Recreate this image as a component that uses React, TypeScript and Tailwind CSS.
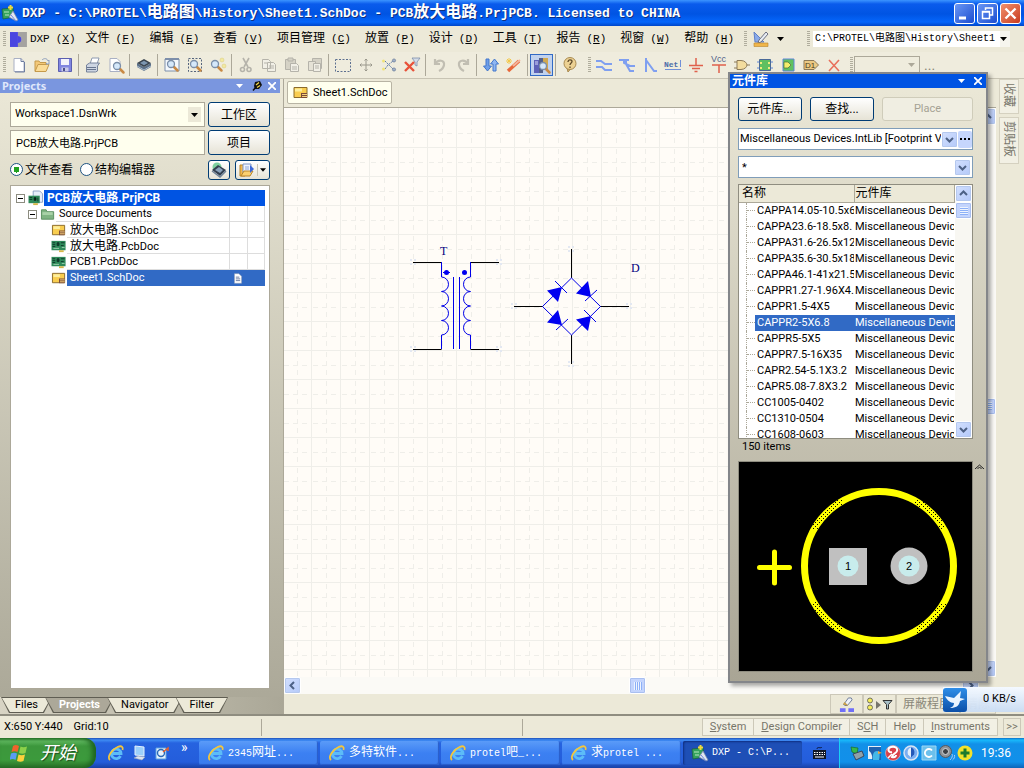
import React from 'react';
import clsx from 'clsx';

const SANS = "font-[Roboto,'Noto_Sans_CJK_SC',sans-serif]";
const MONO = "font-['Liberation_Mono','Noto_Sans_CJK_SC',monospace]";

// Chinese runs are set one size larger than the latin text around them
const Mixed: React.FC<{ text: string; zh?: string }> = ({ text, zh = 'text-[12px]' }) => (
  <span className="whitespace-pre">
    {text.split(/([\u4e00-\u9fff]+)/).map((part, i) =>
      i % 2 ? (
        <span key={i} className={zh}>
          {part}
        </span>
      ) : (
        part
      )
    )}
  </span>
);

const lens = (x: number, y: number) => (
  <g>
    <path d={`M${x + 3} ${y + 3}l3.500 3.500`} stroke="#c98a45" strokeWidth="2.500" strokeLinecap="round" />
    <circle cx={x} cy={y} r="3.500" fill="#d5e8fa" stroke="#7b8ea8" strokeWidth="1.300" />
  </g>
);

const icons: Record<string, React.ReactNode> = {
  new: (
    <>
      <path d="M3 1.500h7l3 3v10H3z" fill="#fff" stroke="#a9b0c4" />
      <path d="M10 1.500v3h3M13.500 5v10H4" fill="none" stroke="#6d7da0" />
    </>
  ),
  open: (
    <>
      <path d="M1 14V4h4l1 1.500h6V8" fill="#f3c878" stroke="#c59a4b" />
      <path d="M1 14.500L4 7.500h11l-3 7z" fill="#fbdc96" stroke="#c59a4b" />
      <path d="M8 3c2-2 5-2 6 1l1-1v4h-3l1-1" fill="none" stroke="#8fa0bd" />
    </>
  ),
  save: (
    <>
      <path d="M1.500 1.500h13v13h-13z" fill="#8186e0" stroke="#5b5fb0" />
      <path d="M4 2h8v6H4z" fill="#f4f4fb" />
      <path d="M4.500 10.500h7v4h-7z" fill="#c9cae8" />
      <path d="M6 11h2v3H6z" fill="#4b4f8a" />
    </>
  ),
  print: (
    <>
      <path d="M5 7l2-6h7l-2 6z" fill="#fff" stroke="#8d9ab0" />
      <path d="M1.500 8l3-2h10l-2 3v5l-2 1h-9z" fill="#cdd5e2" stroke="#76839b" />
      <path d="M2 10.500h9M2 12.500h9" stroke="#68758e" />
    </>
  ),
  preview: (
    <>
      <path d="M2 1.500h7l3 3v10H2z" fill="#fff" stroke="#a9b0c4" />
      {lens(9, 9)}
    </>
  ),
  chip: (
    <>
      <path d="M1 6l7 4v4l-7-4zM15 6l-7 4v4l7-4z" fill="#5b7088" />
      <path d="M1 6l7-4 7 4-7 4z" fill="#39444f" />
      <path d="M4 6l4-2.300L12 6 8 8.300z" fill="#7c96b0" />
      <path d="M1 9l7 4 7-4" stroke="#aebfd0" fill="none" />
    </>
  ),
  zoomDoc: (
    <>
      <path d="M1 2h14v12H1z" fill="#f4f8fc" stroke="#7d8fab" />
      <path d="M1 2h14" stroke="#7d8fab" strokeWidth="2" />
      {lens(7, 7)}
    </>
  ),
  zoomSel: (
    <>
      <path d="M1.500 1.500h13v13h-13z" fill="none" stroke="#55647c" strokeDasharray="2 1.500" />
      {lens(7, 7)}
    </>
  ),
  zoom: (
    <>
      {lens(5, 7)}
      <circle cx="12" cy="3" r="2" fill="#f3e9a0" stroke="#d8cc80" strokeWidth=".5" />
      <circle cx="14" cy="9" r="2" fill="#f3e9a0" stroke="#d8cc80" strokeWidth=".5" />
    </>
  ),
  cut: (
    <g fill="none" stroke="#b5b3aa" strokeWidth="1.600">
      <path d="M5 1l5 9M11 1L6 10" />
      <circle cx="4.500" cy="12.500" r="2" />
      <circle cx="11" cy="12.500" r="2" />
    </g>
  ),
  copy: (
    <g fill="#f1efe6" stroke="#b5b3aa">
      <path d="M1.500 2.500h6l2 2v7h-8zM6.500 5.500h6l2 2v7h-8z" />
      <path d="M3 6h3M8 9h5M8 11h5" />
    </g>
  ),
  paste: (
    <g fill="#d5d2c6" stroke="#b5b3aa">
      <path d="M1.500 2.500h10v10h-10z" />
      <path d="M4 1h5v3H4z" />
      <path d="M6.500 6.500h6l2 2v6h-8z" fill="#f1efe6" />
      <path d="M8 10h5M8 12h5" />
    </g>
  ),
  pasteAll: (
    <g fill="#d5d2c6" stroke="#b5b3aa">
      <path d="M5.500 1.500h9v10h-9z" />
      <path d="M1.500 4.500h7v9h-7z" fill="#e5e2d6" />
      <path d="M6.500 6.500h7v8h-7z" fill="#f1efe6" />
      <path d="M8 9h4M8 11h4" />
    </g>
  ),
  select: <path d="M.5 2.500h15v12H.5z" fill="none" stroke="#5d7090" strokeDasharray="2 1.500" />,
  move: (
    <path
      d="M8 2v12M2 8h12M6.500 3.500L8 2l1.500 1.500M6.500 12.500L8 14l1.500-1.500M3.500 6.500L2 8l1.500 1.500M12.500 6.500L14 8l-1.500 1.500"
      fill="none"
      stroke="#9a988c"
    />
  ),
  clear: (
    <>
      <path d="M4 4l8 8M4 12l3-4 5-4" stroke="#5d7ba8" strokeDasharray="2 1" fill="none" />
      <circle cx="2.500" cy="4" r="1.500" fill="#f0e37a" />
      <circle cx="2.500" cy="12" r="1.500" fill="#f0e37a" />
      <circle cx="13" cy="3.500" r="1.600" fill="#9fb0c8" stroke="#5d7090" strokeWidth=".6" />
      <circle cx="13" cy="12.500" r="1.600" fill="#9fb0c8" stroke="#5d7090" strokeWidth=".6" />
    </>
  ),
  filter: (
    <>
      <path d="M8 1h8l-3 4v4l-2-1V5z" fill="#d5dde8" stroke="#7d8fab" strokeWidth=".8" />
      <path d="M1 5l9 9M10 5l-9 9" stroke="#e8523a" strokeWidth="2.400" />
    </>
  ),
  undo: <path d="M3 2v5h5M3 7c3-5 10-4 9 1-.5 3-3 5-5 6" fill="none" stroke="#c1beb2" strokeWidth="2.200" />,
  redo: <path d="M13 2v5H8M13 7C10 2 3 3 4 8c.5 3 3 5 5 6" fill="none" stroke="#c1beb2" strokeWidth="2.200" />,
  updown: (
    <>
      <path d="M3 2h3v7h2.500L4.500 14 .5 9H3z" fill="#6f9fe8" stroke="#4377cc" />
      <path d="M10 14h3V7h2.500L11.500 2 7.500 7H10z" fill="#8fb6f2" stroke="#4377cc" />
    </>
  ),
  wand: (
    <>
      <path d="M2 14L13 4" stroke="#e8683a" strokeWidth="3.500" />
      <path d="M7 9l7-6" stroke="#f3b49c" strokeWidth="2" />
      <path d="M3 1v6M0 4h6M1 2l4 4M5 2L1 6" stroke="#f3c84a" />
    </>
  ),
  library: (
    <>
      <path d="M0 3h5v13H0z" fill="#5d62b8" />
      <path d="M1 5h3M1 7h3" stroke="#d9dbf8" />
      <path d="M5 1h4v15H5z" fill="#53608a" />
      <path d="M9 1h5v12H9z" fill="#d1a94f" />
      {lens(9, 9)}
    </>
  ),
  help: (
    <>
      <path d="M5 11l1 4 3-3.500" fill="#dcb873" stroke="#a98a50" />
      <circle cx="8" cy="6.500" r="6" fill="#ecd193" stroke="#a98a50" />
      <path d="M6 5c0-3 4-2.500 4-.5C10 6 8 6 8 8M8 9.500V11" fill="none" stroke="#5e4a2a" strokeWidth="1.300" />
    </>
  ),
  wire: <path d="M0 4h5l4 3h7M0 10h6l3 3h7" fill="none" stroke="#7f9ff0" strokeWidth="2" />,
  bus: <path d="M0 3h10M5 3v3l6 3h5M7 3v4l4 7h4" fill="none" stroke="#7f9ff0" strokeWidth="2" />,
  entry: <path d="M4 1v14M4 3l8 11h3" fill="none" stroke="#7f9ff0" strokeWidth="2" />,
  net: (
    <>
      <text x="-1" y="10" fontSize="8" fill="#4d6ca8" fontFamily="Liberation Mono" fontWeight="bold">
        Net
      </text>
      <path d="M15.500 3v7M0 12.500h16" stroke="#6f8fd8" />
    </>
  ),
  gnd: <path d="M8 1v7M1 8.500h14M4 11.500h8M6.500 14.500h3" stroke="#e0604c" strokeWidth="1.500" />,
  vcc: (
    <>
      <text x="0" y="5" fontSize="9" fill="#53648a" fontFamily="Liberation Sans">
        Vcc
      </text>
      <path d="M1 8h14M8 8v8" stroke="#e0604c" strokeWidth="1.500" />
    </>
  ),
  gate: (
    <>
      <path d="M0 5h3M0 11h3M12 8h4" stroke="#8d7a58" />
      <path d="M3 3.500h4c4 0 6 3 6 4.500s-2 4.500-6 4.500H3z" fill="#f3dc9e" stroke="#8d7a58" />
    </>
  ),
  sheet: (
    <>
      <path d="M0 5h16M0 11h16" stroke="#5f86d8" />
      <path d="M2.500 2.500h11v11h-11z" fill="#5fc060" stroke="#4a6a98" />
      <path d="M3 5h2v2H3zM11 5h2v2h-2zM3 10h2v2H3zM11 10h2v2h-2z" fill="#f0ec7a" />
    </>
  ),
  port: (
    <>
      <path d="M3 2h11v12H3z" fill="#5fc060" stroke="#5f86d8" />
      <path d="M4 5h4l3 3-3 3H4z" fill="#f3ee6a" stroke="#4a6a3a" strokeWidth=".7" />
    </>
  ),
  d1: (
    <>
      <path d="M1 3.500h10L15.500 8 11 12.500H1z" fill="#ecca84" stroke="#8d7a58" />
      <text x="2" y="11" fontSize="8" fill="#4b3b1c" fontFamily="Liberation Sans">
        D1
      </text>
    </>
  ),
  cross: <path d="M3 3l10 11M13 3L3 14" stroke="#e8705c" strokeWidth="1.600" />,
  draw: (
    <>
      <path d="M1 1l1 10h9z" fill="#8aaae8" stroke="#5e80c8" />
      <path d="M6 9l7-8 2 2-7 8-3 1z" fill="#e8edf4" stroke="#6b6f80" />
      <path d="M1 12h14v3.500H1z" fill="#f0b64a" stroke="#b8842c" strokeWidth=".6" />
    </>
  ),
  ie: (
    <>
      <path d="M12.500 11A4.800 4.800 0 1 1 13 8.500H4" fill="none" stroke="#5cbcf8" strokeWidth="2.800" />
      <path d="M2 15C-1.500 12 4 4.500 10 1.800c3.500-1.400 5.500 0 4.500 3.200" fill="none" stroke="#f4c63c" strokeWidth="1.800" />
    </>
  ),
  desktop: (
    <>
      <path d="M4 1l9 1v9l-9-1z" fill="#9cd0fb" stroke="#e5f1fd" />
      <path d="M3 13l4-2 7 1-3 3z" fill="#dfe5ee" stroke="#9aa6ba" strokeWidth=".6" />
    </>
  ),
  mail: (
    <>
      <path d="M2 3h10v11H2z" fill="#e8f3fc" stroke="#5aa0e0" />
      <circle cx="7" cy="8" r="3.500" fill="none" stroke="#2a6ab8" strokeWidth="1.400" />
      <path d="M9 7l5-4v3" fill="none" stroke="#e8602a" strokeWidth="1.500" />
    </>
  ),
  app: (
    <>
      <path d="M0 4l11-1 1 9-11 2z" fill="#35a35c" stroke="#1d5c38" strokeWidth=".7" />
      <path d="M2 7h5M3 10h4" stroke="#b8e8c0" />
      <path d="M8.500 0v5M6 2.500h5" stroke="#f0dc3a" strokeWidth="2" />
      <path d="M7 12l4-6 5 9-2 1z" fill="#e0e6f2" stroke="#7888a8" strokeWidth=".8" />
      <path d="M9 10l5 6" stroke="#6d86d8" />
    </>
  ),
  keyboard: (
    <>
      <path d="M5 4c0-3 4 0 5-2" fill="none" stroke="#0b1a40" />
      <path d="M1 5h13v9H1z" fill="#101828" />
      <path d="M2 7.500h11M2 9.500h11" stroke="#fff" strokeDasharray="1.500 1" />
      <path d="M3 12h9" stroke="#fff" />
    </>
  ),
  sch: (
    <>
      <path d="M1 2.500h13v10H1z" fill="#f9cd4f" stroke="#8a6a2a" />
      <path d="M2 3.500h7v3H2z" fill="#fdee9c" />
      <path d="M8 8h6v5H8z" fill="#7a4a3a" />
      <path d="M9 9.500h5M9 11.500h5" stroke="#f6d27a" />
    </>
  ),
  pcb: (
    <>
      <path d="M0 2h15v10H0z" fill="#2f8a5a" />
      <path d="M1 4h3M1 6h3M1 8h3M6 4h2v3H6zM10 4h4M10 7h3" stroke="#0f3a2a" fill="#0f3a2a" />
      <path d="M2 10h6M11 9h3" stroke="#9ccfae" />
      <path d="M8 12h5v2H8z" fill="#d6b84a" />
    </>
  ),
  project: (
    <>
      <path d="M5 0h7l3 3v9H5z" fill="#e6eefa" stroke="#8ba0c4" />
      <path d="M0 5h12v8H0z" fill="#2f8a5a" />
      <path d="M1 7h3M1 9h3M6 7h2v3H6zM10 7v4" stroke="#0f3a2a" />
      <path d="M5 13h5v2H5z" fill="#d6b84a" />
    </>
  ),
  folder: (
    <>
      <path d="M1 3h5l1 2h7v8H1z" fill="#7fb482" stroke="#5a8f60" />
      <path d="M2 5.500h11v3H2z" fill="#a9d2a8" />
    </>
  ),
  chipGlobe: (
    <>
      <circle cx="6" cy="5" r="4.500" fill="#7ed0a0" />
      <path d="M1 8l6-5 8 5-6 6z" fill="#333f4f" />
      <path d="M4 8l4-3 4 3-3 3z" fill="#8ba4bc" />
      <path d="M1 9l8 6 6-6" fill="none" stroke="#6f8296" strokeWidth="1.500" />
    </>
  ),
  docs: (
    <>
      <path d="M1 3h5v11H1z" fill="#f3b94a" stroke="#b98428" />
      <path d="M4 2h8v9H4z" fill="#eef3fd" stroke="#7d95c8" />
      <path d="M6 5h4M6 7h4" stroke="#8fa6d8" />
      <path d="M2 14l3-5h9l-3 5z" fill="#fbd070" stroke="#b98428" />
      <path d="M11 3l4 4-4 4z" fill="#3c68d8" />
    </>
  ),
  page: (
    <>
      <path d="M4 3h5l3 3v8H4z" fill="#fff" stroke="#9aa4b8" strokeWidth=".6" />
      <path d="M5.500 7h4M5.500 9h5M5.500 11h5" stroke="#5b6f98" />
    </>
  ),
  eraser: (
    <>
      <path d="M5 8l5-7h3l1 2-5 6H6z" fill="#eef2f8" stroke="#6a7896" />
      <path d="M5 8l1-1.500 3 2.500" stroke="#caa24c" strokeWidth="1.500" />
      <path d="M1 12h6v4H1zM10 12h6v4h-6z" fill="#6f6ff8" />
    </>
  ),
  trayCard: (
    <>
      <path d="M2 2l7 1-1 6-5-2z" fill="#38b848" stroke="#1a6a2c" strokeWidth=".7" />
      <path d="M4 9l9-3 2 5-8 4z" fill="#8fa0a8" stroke="#334" strokeWidth=".8" />
    </>
  ),
  trayBird: (
    <>
      <path d="M1 1h13v13H1z" fill="#e4eef8" />
      <path d="M2 2h12v13H5c1-4-1-8-3-9z" fill="#1f62b0" />
      <path d="M6 15c-1-6 1-9 4-9s3 4 2 9z" fill="#44b8e8" />
      <path d="M11 6l4 2-4 1z" fill="#f4a83a" />
    </>
  ),
  trayFan: (
    <>
      <circle cx="8" cy="8" r="7.500" fill="#d8414a" stroke="#f3c4c4" strokeWidth=".6" />
      <path d="M7 7C3 8 2 3 6 2c4-1 7 1 6 4-1 3-4 2-5 6 4 1 4-2 4-2" fill="none" stroke="#fff" strokeWidth="2" />
      <path d="M3 13L7 9" stroke="#fff" strokeWidth="1.500" />
    </>
  ),
  trayShield: (
    <>
      <circle cx="8" cy="8" r="7" fill="#7aaef2" stroke="#d8e4f4" strokeWidth="1.500" />
      <path d="M8 2.500c3 1 4 4 3 7l-3 3z" fill="#2458b8" />
      <path d="M8 2.500c-3 1-4 4-3 7l3 3z" fill="#e5effc" />
    </>
  ),
  trayC: (
    <>
      <path d="M1 1h14v14H1z" fill="#6cc0ec" stroke="#9cd8f4" />
      <path d="M11 5.500A4 4 0 1 0 11 10.500" fill="none" stroke="#fff" strokeWidth="1.800" />
    </>
  ),
  traySound: (
    <>
      <circle cx="6.500" cy="6.500" r="6" fill="#8d9298" stroke="#55595f" />
      <circle cx="6.500" cy="6.500" r="3" fill="#3c4046" stroke="#d5d8dc" />
      <path d="M13 9c1 2 0 4-2 6M15.500 10c.5 2-.5 4-2 5" fill="none" stroke="#a8c8f4" />
    </>
  ),
  trayPlus: (
    <>
      <circle cx="8" cy="8" r="7.500" fill="#f2e22c" />
      <path d="M8 3.500v9M3.500 8h9" stroke="#1d7a2c" strokeWidth="3" />
    </>
  ),
};

const Icon: React.FC<{ name: string; className?: string }> = ({ name, className = 'size-4' }) => (
  <svg viewBox="0 0 16 16" className={clsx('shrink-0 overflow-visible', className)} aria-hidden="true">
    {icons[name]}
  </svg>
);

const Caret: React.FC<{ className?: string }> = ({ className = 'text-black' }) => (
  <svg viewBox="0 0 7 4" className={clsx('h-1 w-[7px] shrink-0', className)} aria-hidden="true">
    <path d="M0 0h7L3.500 4z" fill="currentColor" />
  </svg>
);

const chevrons: Record<string, string> = {
  up: 'M1 6l3.500-3.500L8 6',
  down: 'M1 3l3.500 3.500L8 3',
  left: 'M6 1L2.500 4.500 6 8',
  right: 'M3 1l3.500 3.500L3 8',
};

const ScrollButton: React.FC<{ dir: string; label: string }> = ({ dir, label }) => (
  <button
    aria-label={label}
    className="flex size-[17px] shrink-0 items-center justify-center rounded-xs border border-white bg-linear-to-br from-[#d3e0fe] to-[#b4c9f9] shadow-[0_0_0_1px_#b5c8ee_inset]"
  >
    <svg viewBox="0 0 9 9" className="size-[9px]" aria-hidden="true">
      <path d={chevrons[dir]} fill="none" stroke="#4d6185" strokeWidth="2" />
    </svg>
  </button>
);

const Thumb: React.FC<{ vertical?: boolean }> = ({ vertical }) => (
  <div className="flex size-[17px] shrink-0 items-center justify-center rounded-xs border border-white bg-[#c3d4fd] shadow-[0_0_0_1px_#a9bff0_inset]">
    <div
      className={clsx(
        'size-2',
        vertical
          ? 'bg-[repeating-linear-gradient(180deg,#eef4fe_0_1px,#8cb0f8_1px_2px)]'
          : 'bg-[repeating-linear-gradient(90deg,#eef4fe_0_1px,#8cb0f8_1px_2px)]'
      )}
    />
  </div>
);

const Grip = () => (
  <div className="mr-px ml-[3px] h-4 w-[3px] shrink-0 bg-[repeating-linear-gradient(180deg,#b0ad9d_0_1px,transparent_1px_2px)]" />
);

const menus = [
  ['DXP', 'X'],
  ['文件', 'F'],
  ['编辑', 'E'],
  ['查看', 'V'],
  ['项目管理', 'C'],
  ['放置', 'P'],
  ['设计', 'D'],
  ['工具', 'T'],
  ['报告', 'R'],
  ['视窗', 'W'],
  ['帮助', 'H'],
];

const mainTools =
  'new open save | print preview | chip | zoomDoc zoomSel zoom | cut copy paste pasteAll | select move clear filter | undo redo | updown wand | library | help'.split(' ');
const wiringTools = 'wire bus entry net gnd vcc gate sheet port d1 cross'.split(' ');

const TitleBar = () => (
  <header className="flex h-[26px] items-center bg-[linear-gradient(180deg,#3c94ff_0,#0a5bec_4px,#0054e3_14px,#0566fb_22px,#0046c8_26px)] pr-[3px] pl-[2px]">
    <Icon name="app" />
    <h1 className={clsx(MONO, 'ml-1 flex-1 truncate text-[13px] leading-[26px] font-bold text-white [text-shadow:1px_1px_0_#0f2f80]')}>
      <Mixed text="DXP - C:\PROTEL\电路图\History\Sheet1.SchDoc - PCB放大电路.PrjPCB. Licensed to CHINA" zh="text-[16px]" />
    </h1>
    <div className="flex gap-0.5">
      {['min', 'restore', 'close'].map((kind) => (
        <button
          key={kind}
          aria-label={kind}
          className={clsx(
            'size-[21px] rounded-[3px] border border-white',
            kind === 'close'
              ? 'bg-linear-to-br from-[#f0906c] to-[#c8381c]'
              : 'bg-linear-to-br from-[#6a96f4] to-[#1c4cd0]'
          )}
        >
          <svg viewBox="0 0 19 19" fill="none" stroke="#fff" strokeWidth="2" aria-hidden="true">
            {kind === 'min' && <path d="M4 14h7" strokeWidth="3" />}
            {kind === 'restore' && (
              <path d="M7.500 6V4h7v7H12M4.500 7.500h7v7h-7zM4 8h8" strokeWidth="1.500" />
            )}
            {kind === 'close' && <path d="M4.500 4.500l10 10M14.500 4.500l-10 10" strokeWidth="2.400" />}
          </svg>
        </button>
      ))}
    </div>
  </header>
);

const MenuBar = () => (
  <nav className="flex h-[26px] items-center pr-[14px]">
    <Grip />
    <svg viewBox="0 0 17 15" className="ml-[3px] h-[15px] w-[17px]" aria-hidden="true">
      <path d="M0 0h8v15H0z" fill="#4a46e0" />
      <path d="M8 0h9v15H8V11a3.500 3.500 0 0 0 0-7z" fill="#a5a3a0" />
      <path d="M8 4a3.500 3.500 0 0 1 0 7z" fill="#4a46e0" />
    </svg>
    <div className="flex flex-1">
      {menus.map(([label, key]) => (
        <button
          key={key}
          className={clsx(MONO, 'flex items-baseline gap-1.5 text-[11px] leading-4', key === 'X' ? 'px-[3px]' : 'px-[7px]')}
        >
          <Mixed text={label} />
          <span>
            (<u>{key}</u>)
          </span>
        </button>
      ))}
    </div>
    <Grip />
    <button className="flex items-center gap-2 pr-5 pl-[5px]" aria-label="绘图工具">
      <Icon name="draw" />
      <Caret />
    </button>
    <Grip />
    <div className="relative ml-0.5 flex w-[198px] items-center">
      <select
        aria-label="文件路径"
        className={clsx(MONO, 'h-4 w-full appearance-none bg-white pl-0.5 text-[10px] leading-4')}
      >
        <option>C:\PROTEL\电路图\History\Sheet1</option>
      </select>
      <span className="pointer-events-none absolute right-0 flex h-4 w-2.5 items-center bg-[#f6f5ee]">
        <Caret />
      </span>
    </div>
  </nav>
);

const ToolBar = () => (
  <div className="flex h-[26px] items-center bg-[#efecdd] pb-px">
    <Grip />
    {mainTools.map((name, i) =>
      name === '|' ? (
        <span key={i} className="mx-0.5 h-[22px] w-px shrink-0 bg-[#aca899]" />
      ) : (
        <button
          key={i}
          aria-label={name}
          className={clsx(
            'flex h-[22px] w-[23px] shrink-0 items-center justify-center',
            name === 'library' && 'border border-[#316ac5] bg-[#c1d2ee]'
          )}
        >
          <Icon name={name} />
        </button>
      )
    )}
    <div className="ml-1">
      <Grip />
    </div>
    {wiringTools.map((name) => (
      <button key={name} aria-label={name} className="flex h-[22px] w-[23px] shrink-0 items-center justify-center">
        <Icon name={name} />
      </button>
    ))}
    <div className="ml-0.5">
      <Grip />
    </div>
    <button
      disabled
      aria-label="过滤器"
      className="flex h-[18px] w-[66px] shrink-0 items-center justify-end border border-[#aca899] pr-1"
    >
      <Caret className="text-[#aca899]" />
    </button>
    <span className="ml-1 text-[14px] leading-4 text-[#8a8778]">...</span>
  </div>
);

const xpButton =
  'rounded-[3px] border border-[#003c74] bg-linear-to-b from-white to-[#e6e3d6] text-[12px] leading-4';

interface TreeRowProps {
  icon: string;
  label: string;
  indent: string;
  expand?: boolean;
  selected?: boolean;
  root?: boolean;
}

const TreeRow: React.FC<TreeRowProps> = ({ icon, label, indent, expand, selected, root }) => (
  <li className={clsx('flex h-4 items-center', indent)}>
    {expand && (
      <button
        aria-label="折叠"
        className="mr-[3px] flex size-[9px] items-center justify-center border border-[#8c8c80] bg-white"
      >
        <span className="h-px w-[5px] bg-black" />
      </button>
    )}
    <Icon name={icon} className="h-[15px] w-4" />
    <span
      className={clsx(
        'flex h-4 flex-1 items-center pl-[3px] leading-4',
        root ? 'bg-[#0054e3] text-[12px] font-bold text-white' : 'text-[11px]',
        selected && 'bg-[#316ac5] text-white',
        !root && !selected && 'shadow-[inset_0_-1px_0_#dddddd]'
      )}
    >
      <span className="flex-1">
        <Mixed text={label} />
      </span>
      {!root && (
        <>
          <span className={clsx('flex h-4 w-[18px] items-center justify-center', !selected && 'border-l border-[#dddddd]')}>
            {selected && <Icon name="page" className="size-[14px]" />}
          </span>
          <span className={clsx('h-4 w-[18px]', !selected && 'border-x border-[#dddddd]')} />
        </>
      )}
    </span>
  </li>
);

const tabShape = '[clip-path:polygon(0_0,100%_0,calc(100%-8px)_100%,8px_100%)]';

const ProjectsPanel = () => (
  <aside className="flex w-[284px] shrink-0 flex-col border-r border-[#aca899] bg-linear-to-b from-[#ece9d8] to-[#aaa797]">
    <div className="mr-[3px] flex h-[14px] items-center bg-[#7a96df] pr-1 pl-[2px] text-[#dfe7fb]">
      <h2 className="flex-1 font-['Noto_Sans',sans-serif] text-[11px] leading-[14px] font-bold">Projects</h2>
      <Caret className="mr-2 !w-[9px] text-white" />
      <svg viewBox="0 0 10 10" className="mr-1.5 size-[10px]" aria-hidden="true">
        <path d="M3 1l5-1 2 4-3 4-4 0-1-3z" fill="#111" />
        <path d="M4 4l3-2.500M5 6.500l3-2" stroke="#f4d84a" strokeWidth="1.300" fill="none" />
        <path d="M4 6L1 9.500" stroke="#111" strokeWidth="1.500" />
      </svg>
      <svg viewBox="0 0 8 8" className="size-2" aria-hidden="true">
        <path d="M0 0l8 8M8 0L0 8" stroke="#fff" strokeWidth="1.800" />
      </svg>
    </div>
    <div className="flex flex-1 flex-col pt-[9px] pr-[13px] pb-2 pl-[10px]">
      <div className="grid grid-cols-[1fr_62px] gap-[3px]">
        <div className="relative flex items-center">
          <select
            aria-label="工作区"
            className="h-[25px] w-full appearance-none border border-[#aca899] bg-[#ffffee] pl-1 text-[11px]"
          >
            <option>Workspace1.DsnWrk</option>
          </select>
          <span className="pointer-events-none absolute right-1 flex h-[15px] w-[13px] items-center justify-center bg-[#ece9d8]">
            <Caret />
          </span>
        </div>
        <button className={clsx(xpButton, 'h-[25px]')}>工作区</button>
        <input
          aria-label="项目"
          readOnly
          value="PCB放大电路.PrjPCB"
          className="h-[25px] min-w-0 border border-[#aca899] bg-[#ffffee] px-[5px] pb-0.5 text-[11px] leading-4"
        />
        <button className={clsx(xpButton, 'h-[25px]')}>项目</button>
      </div>
      <div className="mt-1 flex h-[21px] items-center text-[12px] leading-4">
        {['文件查看', '结构编辑器'].map((label, i) => (
          <label key={label} className="mr-[7px] flex items-center gap-0.5">
            <input
              type="radio"
              name="view"
              defaultChecked={i === 0}
              className="size-[13px] appearance-none rounded-full border border-[#1d5281] bg-white checked:bg-[radial-gradient(#21a121_0_3px,#fff_3px)]"
            />
            {label}
          </label>
        ))}
        <span className="flex-1" />
        <button aria-label="编译" className={clsx(xpButton, 'flex h-5 w-[22px] items-center justify-center')}>
          <Icon name="chipGlobe" />
        </button>
        <button aria-label="文档" className={clsx(xpButton, 'ml-[5px] flex h-5 w-[35px] items-center justify-between px-[3px]')}>
          <Icon name="docs" />
          <span className="h-3 w-px bg-[#c8c4b4]" />
          <Caret className="!w-[6px] text-black" />
        </button>
      </div>
      <ul className="mt-[5px] flex-1 border border-[#aca899] bg-white pt-1 pr-1">
        <TreeRow icon="project" label="PCB放大电路.PrjPCB" indent="pl-[5px]" expand root />
        <TreeRow icon="folder" label="Source Documents" indent="pl-[17px]" expand />
        <TreeRow icon="sch" label="放大电路.SchDoc" indent="pl-10" />
        <TreeRow icon="pcb" label="放大电路.PcbDoc" indent="pl-10" />
        <TreeRow icon="pcb" label="PCB1.PcbDoc" indent="pl-10" />
        <TreeRow icon="sch" label="Sheet1.SchDoc" indent="pl-10" selected />
      </ul>
    </div>
    <div className="flex h-[17px] bg-linear-to-r from-[#d8d4c4] to-[#aaa797] pl-px text-[11px] leading-[14px]">
      {['Files', 'Projects', 'Navigator', 'Filter'].map((tab) => (
        <button key={tab} className={clsx('-mr-[7px] h-4 bg-[#5f5d52] p-px', tabShape)}>
          <span
            className={clsx(
              'block h-[14px] px-[13px]',
              tabShape,
              tab === 'Projects' ? 'bg-[#aca899] font-bold text-white' : 'bg-[#ece9d8]'
            )}
          >
            {tab}
          </span>
        </button>
      ))}
    </div>
  </aside>
);

const LeadEnd: React.FC<{ x: number; y: number }> = ({ x, y }) => (
  <path d={`M${x - 3} ${y - 3}h2v2h-2zM${x + 1} ${y - 3}h2v2h-2zM${x - 3} ${y + 1}h2v2h-2zM${x + 1} ${y + 1}h2v2h-2z`} fill="#e3e8f2" />
);

const Schematic = () => (
  <svg className="absolute inset-0 size-full bg-[#fffcf7]" role="img" aria-label="Sheet1.SchDoc">
    <defs>
      <pattern id="grid" width="29" height="29" x="27" y="10" patternUnits="userSpaceOnUse">
        <path d="M.5 0v29M0 .5h29" stroke="#efeee9" />
        <path d="M15.500 2v29M2 15.500h29" stroke="#efeee9" strokeDasharray="5 4" />
      </pattern>
    </defs>
    <rect width="100%" height="100%" fill="url(#grid)" />
    {[
      [129, 154],
      [215, 154],
      [129, 241],
      [215, 241],
      [287, 141],
      [287, 256],
      [230, 198],
      [345, 198],
    ].map(([x, y]) => (
      <LeadEnd key={`${x}-${y}`} x={x} y={y} />
    ))}
    <g fill="none" stroke="#000">
      <path d="M129 154.500h28.500M186.500 154.500H215M129 241.500h28.500M186.500 241.500H215" />
      <path d="M287.500 141v29M287.500 227v29M230 198.500h29M316 198.500h29" />
    </g>
    <g fill="none" stroke="#0000e8">
      <path d="M157.500 154v15a7 7.250 0 0 1 0 14.500a7 7.250 0 0 1 0 14.500a7 7.250 0 0 1 0 14.500a7 7.250 0 0 1 0 14.500v14" />
      <path d="M186.500 154v15a7 7.250 0 0 0 0 14.500a7 7.250 0 0 0 0 14.500a7 7.250 0 0 0 0 14.500a7 7.250 0 0 0 0 14.500v14" />
      <path d="M169.500 169v72M175.500 169v72" />
      <path d="M287.500 170l29 28.500-29 28.500-29-28.500z" />
      <path d="M271 173l12 12M301 193l12-11M272 222l12-11M300 202l12 12" />
    </g>
    <g fill="#0000f0">
      <path d="M159 164h7v1h-7z" />
      <circle cx="162.500" cy="164.500" r="2.500" />
      <circle cx="180.500" cy="164.500" r="2.500" />
      <path d="M263 182.500l15-3.500-4 15zM292 185.500l12-12.500 3 16zM263 214.500l11-12.500 4 15zM292 211.500l15-3.500-3 15z" />
    </g>
    <g fill="#000080" fontSize="12" fontFamily="Liberation Serif, serif">
      <text x="156" y="147">
        T
      </text>
      <text x="347" y="164">
        D
      </text>
    </g>
  </svg>
);

const Workspace = () => (
  <main className="flex min-w-0 flex-1 flex-col">
    <div className="flex h-[29px] items-center border-b border-[#aca899] pl-[3px]">
      <button className="mb-px flex h-[23px] items-center gap-1 rounded-[2px] border border-[#b8b4a4] bg-[#ffffee] pr-[3px] pl-[5px] text-[11px] leading-4">
        <Icon name="sch" />
        Sheet1.SchDoc
      </button>
    </div>
    <div className="flex flex-1">
      <div className="relative flex-1">
        <Schematic />
      </div>
      <div className="flex w-[17px] flex-col bg-[#fbfaf6]">
        <ScrollButton dir="up" label="向上滚动" />
        <span className="flex-[10]" />
        <Thumb vertical />
        <span className="flex-[9]" />
        <ScrollButton dir="down" label="向下滚动" />
      </div>
    </div>
    <div className="mr-[17px] flex h-[17px] bg-[#fbfaf6]">
      <ScrollButton dir="left" label="向左滚动" />
      <span className="flex-[51]" />
      <Thumb />
      <span className="flex-[49]" />
      <ScrollButton dir="right" label="向右滚动" />
    </div>
    <div className="flex h-5 justify-end text-[12px] leading-4 text-[#8a8778]">
      <button aria-label="清除遮罩" className="flex w-[33px] items-center justify-center border border-[#ccc8b8]">
        <Icon name="eraser" className="size-[15px]" />
      </button>
      <button aria-label="过滤" className="flex w-[33px] items-center justify-center border border-[#ccc8b8]">
        <svg viewBox="0 0 26 14" className="h-[14px] w-[26px]" aria-hidden="true">
          <circle cx="3" cy="3.500" r="2.500" fill="#f4ec5a" stroke="#555" strokeWidth=".8" />
          <circle cx="3" cy="10.500" r="2.500" fill="#f4ec5a" stroke="#555" strokeWidth=".8" />
          <path d="M9 4l5 4-5 4z" fill="#77756c" />
          <path d="M16 3.500h9l-3.500 4V12h-2V7.500z" fill="#a8c0c8" stroke="#333" />
        </svg>
      </button>
      <button className="w-[64px] border border-[#ccc8b8] px-1.5 text-left whitespace-nowrap">屏蔽程度</button>
      <button className="w-9 border border-[#ccc8b8]">清除</button>
    </div>
  </main>
);

const parts = [
  'CAPPA14.05-10.5x6',
  'CAPPA23.6-18.5x8.',
  'CAPPA31.6-26.5x12',
  'CAPPA35.6-30.5x18',
  'CAPPA46.1-41x21.5',
  'CAPPR1.27-1.96X4.',
  'CAPPR1.5-4X5',
  'CAPPR2-5X6.8',
  'CAPPR5-5X5',
  'CAPPR7.5-16X35',
  'CAPR2.54-5.1X3.2',
  'CAPR5.08-7.8X3.2',
  'CC1005-0402',
  'CC1310-0504',
  'CC1608-0603',
];

const Footprint = () => (
  <svg viewBox="0 0 233 209" className="block w-full bg-black" role="img" aria-label="CAPPR2-5X6.8">
    <defs>
      <pattern id="mesh" width="4" height="4" patternUnits="userSpaceOnUse">
        <path d="M0 0h1v1H0zM2 2h1v1H2z" fill="#000" />
      </pattern>
    </defs>
    <circle cx="140" cy="104" r="74.500" fill="none" stroke="#ffff00" strokeWidth="7" />
    <path
      d="M75 67a74.500 74.500 0 0 1 28-28M177 39a74.500 74.500 0 0 1 28 28M75 141a74.500 74.500 0 0 0 28 28M177 169a74.500 74.500 0 0 0 28-28"
      fill="none"
      stroke="url(#mesh)"
      strokeWidth="6"
      shapeRendering="crispEdges"
    />
    <path d="M20.500 105.500h30M35.500 90v31" stroke="#ffff00" strokeWidth="5" strokeLinecap="round" />
    <path d="M90 86h38v37H90z" fill="#c0c0c0" />
    <circle cx="170" cy="104" r="18.500" fill="#c0c0c0" />
    <circle cx="109" cy="104" r="10.500" fill="#c8ecec" />
    <circle cx="170" cy="104" r="10.500" fill="#c8ecec" />
    <g fontSize="11" fontFamily="Liberation Sans, sans-serif" textAnchor="middle">
      <text x="109" y="108">
        1
      </text>
      <text x="170" y="108">
        2
      </text>
    </g>
  </svg>
);

const LibraryPanel = () => (
  <section className="absolute top-[72px] right-9 w-[260px] border-2 border-[#84868a] bg-linear-to-b from-[#ece9d8] to-[#a9a595] shadow-[3px_3px_4px_#00000055]">
    <div className="flex h-[14px] items-center bg-[#0054e3] pr-1 pl-0.5 text-white">
      <h2 className="flex-1 text-[12px] leading-[14px] font-bold">元件库</h2>
      <Caret className="mr-2 !w-[9px] text-white" />
      <svg viewBox="0 0 8 8" className="size-2" aria-hidden="true">
        <path d="M0 0l8 8M8 0L0 8" stroke="#fff" strokeWidth="1.800" />
      </svg>
    </div>
    <div className="pt-[9px] pr-[13px] pb-[9px] pl-2">
      <div className="flex gap-2">
        <button className={clsx(xpButton, 'h-6 w-16')}>元件库...</button>
        <button className={clsx(xpButton, 'h-6 w-16')}>查找...</button>
        <button disabled className="h-6 flex-1 rounded-[3px] border border-[#cfccba] bg-[#f0eee2] text-[11px] text-[#a5a294]">
          Place
        </button>
      </div>
      <div className="mt-[7px] flex h-[22px] items-center border border-[#7f9db9] bg-white">
        <select aria-label="库" className="h-full min-w-0 flex-1 appearance-none pl-px text-[11px]">
          <option>Miscellaneous Devices.IntLib [Footprint V</option>
        </select>
        <ScrollButton dir="down" label="选择库" />
        <button aria-label="更多" className="flex h-[17px] w-[14px] items-center justify-center gap-[2px] rounded-xs bg-[#c6d6fd]">
          <span className="size-[2px] bg-black" />
          <span className="size-[2px] bg-black" />
          <span className="size-[2px] bg-black" />
        </button>
      </div>
      <div className="mt-1.5 flex h-[22px] items-center border border-[#7f9db9] bg-white pr-px">
        <input aria-label="过滤" defaultValue="*" className="h-full min-w-0 flex-1 pl-[3px] text-[11px]" />
        <ScrollButton dir="down" label="过滤历史" />
      </div>
      <div className="mt-1.5 flex h-[255px] overflow-hidden border border-[#8f8d80] bg-white">
        <table className="flex-1 table-fixed border-collapse self-start text-left text-[11px] leading-4">
          <colgroup>
            <col className="w-[115px]" />
            <col className="w-[101px]" />
          </colgroup>
          <thead>
            <tr className="h-[17px] border-b border-[#aca899] bg-[#ece9d8] text-[12px]">
              <th className="border-r border-[#aca899] pl-[3px] font-normal">名称</th>
              <th className="border-r border-[#aca899] pl-px font-normal">元件库</th>
            </tr>
          </thead>
          <tbody>
            {parts.map((part) => {
              const selected = part === 'CAPPR2-5X6.8';
              return (
                <tr key={part} className="h-4">
                  <td className="p-0">
                    <div className="flex h-4 w-[115px] items-center pl-[7px]">
                      <span className="h-4 border-l border-dotted border-[#aca899]" />
                      <span className="w-2 shrink-0 border-t border-dotted border-[#aca899]" />
                      <span className={clsx('flex-1 overflow-hidden pl-0.5 whitespace-nowrap', selected && 'bg-[#316ac5] text-white')}>
                        {part}
                      </span>
                    </div>
                  </td>
                  <td className={clsx('p-0', selected && 'bg-[#316ac5] text-white')}>
                    <div className="h-4 w-[100px] overflow-hidden pl-px whitespace-nowrap">Miscellaneous Devic</div>
                  </td>
                </tr>
              );
            })}
          </tbody>
        </table>
        <div className="flex w-[17px] shrink-0 flex-col bg-[#f8f7f2]">
          <ScrollButton dir="up" label="向上滚动" />
          <Thumb vertical />
          <span className="flex-1" />
          <ScrollButton dir="down" label="向下滚动" />
        </div>
      </div>
      <p className="pl-1 text-[11px] leading-[15px]">150 items</p>
      <div className="relative mt-[7px] border border-[#8f8d80]">
        <Footprint />
        <button aria-label="收起" className="absolute top-0.5 -right-3">
          <svg viewBox="0 0 9 5" className="h-[5px] w-[9px]" aria-hidden="true">
            <path d="M0 5l4.500-4L9 5M2.500 5l2-2 2 2" fill="none" stroke="#222" />
          </svg>
        </button>
      </div>
    </div>
  </section>
);

const SpeedWidget = () => (
  <div className="absolute right-0 bottom-14 flex h-[25px] w-[81px] items-center bg-linear-to-b from-[#f4f9ff] to-[#c9dcf4f0] text-[11px]">
    <svg viewBox="0 0 24 24" className="size-6 shrink-0 rounded-[3px] bg-linear-to-b from-[#2f8ee8] to-[#0b4fa8]" aria-hidden="true">
      <path d="M2 8l9 2 7-7-1 7 5 1-5 2c-1 5-4 7-10 7 3-1 4-3 4-5-4 0-7-3-9-7z" fill="#eaf4ff" />
    </svg>
    <span className="flex-1 pr-2 text-right whitespace-nowrap">0 KB/s</span>
  </div>
);

const panelButtons = [
  ['', 'S', 'ystem'],
  ['', 'D', 'esign Compiler'],
  ['S', 'C', 'H'],
  ['Help', '', ''],
  ['', 'I', 'nstruments'],
];

const StatusBar = () => (
  <div className="flex h-6 items-center border-t-2 border-[#8f8d80] pr-[3px] text-[11px] leading-4">
    <span className="w-[261px] pl-1 whitespace-pre">X:650 Y:440{'   '} Grid:10</span>
    <span className="h-[17px] w-[262px] border-x border-[#aca899]" />
    <span className="flex-1" />
    <div className="flex border border-[#ccc8b8] text-[#77756a]">
      {panelButtons.map(([pre, key, post]) => (
        <button key={pre + key + post} className="h-4 border-r border-[#ccc8b8] bg-[#f2f0e4] px-[7px] leading-4 last:border-r-0">
          {pre}
          <u>{key}</u>
          {post}
        </button>
      ))}
    </div>
    <button className="ml-[5px] h-[18px] w-[18px] border border-[#ccc8b8] leading-4 text-[#77756a]">&gt;&gt;</button>
  </div>
);

const tasks = [
  { icon: 'ie', label: '2345网址...' },
  { icon: 'ie', label: '多特软件...' },
  { icon: 'ie', label: 'protel吧_...' },
  { icon: 'ie', label: '求protel ...' },
  { icon: 'app', label: 'DXP - C:\\P...', active: true },
];

const TaskBar = () => (
  <footer className="flex h-[30px] bg-[linear-gradient(180deg,#1f4fb8_0,#3f8cf3_2px,#2663e0_5px,#245ddb_24px,#1941a5_30px)] text-white">
    <button className="flex w-24 shrink-0 items-center gap-2.5 rounded-r-xl bg-[linear-gradient(180deg,#2f7d2f_0,#5fb85f_3px,#3c973c_8px,#3c9a3c_22px,#2a7028_30px)] pl-2.5 shadow-[inset_-4px_0_5px_#1e6420]">
      <svg viewBox="0 0 20 18" className="h-[18px] w-5" aria-hidden="true">
        <path d="M3 2c2-1.500 4-1 6 0L7.500 8c-2-1-4-1-6 0z" fill="#f0632c" />
        <path d="M10.500 2.500c2 1 4 1 6.500 0L15.500 9c-2 1-4 1-6.500 0z" fill="#8cd04a" />
        <path d="M1 9.500c2-1 4-1 6 0L5.500 16c-2-1.500-4-1.500-6 0z" fill="#5a9cf4" />
        <path d="M8.500 10.500c2 1 4 1 6.500 0L13.500 17c-2 1-4 1-6.500 0z" fill="#fbd13c" />
      </svg>
      <span className={clsx(SANS, 'text-[18px] leading-6 italic [text-shadow:1px_1px_1px_#1c4a1c]')}>开始</span>
    </button>
    <div className="flex w-[103px] shrink-0 items-center gap-[7px] pl-3">
      <Icon name="ie" />
      <Icon name="desktop" />
      <Icon name="mail" />
      <span className="ml-1 self-start pt-px text-[14px] leading-4">»</span>
    </div>
    <div className="flex min-w-0 flex-1 items-center gap-0.5">
      {tasks.map(({ icon, label, active }) => (
        <button
          key={label}
          className={clsx(
            MONO,
            'flex h-6 w-[119px] items-center gap-1 rounded-[2px] pl-[9px] text-[10px] leading-4',
            active
              ? 'bg-[#1e4fb6] shadow-[inset_1px_1px_2px_#0f2f80]'
              : 'bg-linear-to-b from-[#5a9bf8] via-[#3c80f2] to-[#3a7cee] shadow-[inset_-1px_-1px_1px_#2a5cc8]'
          )}
        >
          <Icon name={icon} />
          <Mixed text={label} />
        </button>
      ))}
      <Icon name="keyboard" className="ml-2 size-4" />
    </div>
    <div className="flex w-[185px] shrink-0 items-center gap-0.5 border-l border-[#19d0f5] bg-[linear-gradient(180deg,#0d6fc8_0,#18b9fb_2px,#1290e8_6px,#1190ea_24px,#0d64b8_30px)] pl-[9px]">
      {['trayCard', 'trayBird', 'trayFan', 'trayShield', 'trayC', 'traySound', 'trayPlus'].map((name) => (
        <Icon key={name} name={name} />
      ))}
      <time className="ml-1.5 text-[12px] leading-4">19:36</time>
    </div>
  </footer>
);

const App: React.FC = () => {
  return (
    <div className={clsx(SANS, 'relative flex min-h-screen flex-col overflow-hidden bg-[#ece9d8] text-black')}>
      <TitleBar />
      <MenuBar />
      <ToolBar />
      <div className="flex flex-1 border-t border-[#c8c4b4]">
        <ProjectsPanel />
        <Workspace />
        <div className="flex w-7 shrink-0 flex-col items-start gap-[3px] pl-[3px] text-[12px] leading-3 text-[#77756a]">
          {['收藏', '剪贴板'].map((tab) => (
            <button key={tab} className="flex w-5 justify-center border border-[#d5d1c0] bg-[#f2f0e4] pt-[3px] pb-1.5">
              <span className="[text-orientation:sideways] [writing-mode:vertical-rl]">{tab}</span>
            </button>
          ))}
        </div>
      </div>
      <StatusBar />
      <TaskBar />
      <LibraryPanel />
      <SpeedWidget />
    </div>
  );
};

export default App;
